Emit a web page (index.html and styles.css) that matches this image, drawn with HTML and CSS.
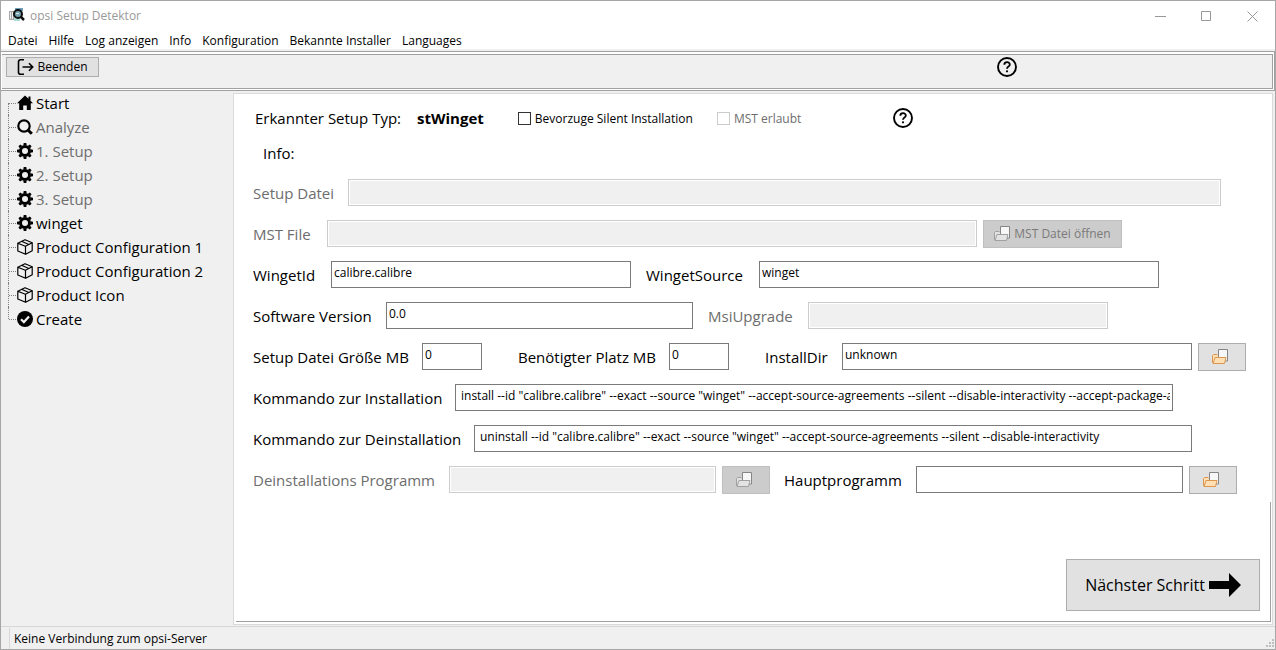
FILE: index.html
```html
<!DOCTYPE html>
<html lang="de">
<head>
<meta charset="utf-8">
<title>opsi Setup Detektor</title>
<link rel="stylesheet" href="styles.css">
</head>
<body>
<svg class="sprite" aria-hidden="true">
  <symbol id="gear" viewBox="0 0 16 16">
    <g fill="currentColor">
      <path fill-rule="evenodd" d="M8 2a6 6 0 1 0 0 12A6 6 0 0 0 8 2zm0 3a3 3 0 1 1 0 6 3 3 0 0 1 0-6z"/>
      <path d="M6.300 2.500 6.700 0h2.600l.4 2.500zM6.300 13.500 6.700 16h2.600l.4-2.500zM2.500 6.300 0 6.700v2.600l2.500.4zM13.500 6.300l2.500.4v2.600l-2.500.4z"/>
      <path d="M2.900 5.300 1.400 3.300l1.900-1.900 2 1.500zM13.100 5.300l1.500-2-1.900-1.900-2 1.500zM2.900 10.700l-1.500 2 1.900 1.900 2-1.500zM13.100 10.700l1.500 2-1.900 1.900-2-1.500z"/>
    </g>
  </symbol>
  <symbol id="box" viewBox="0 0 16 16">
    <g fill="none" stroke="currentColor" stroke-width="1.200" stroke-linejoin="round" stroke-linecap="round">
      <path d="M8 .7 15.200 3.700v8L8.600 15.300 .8 12V4.200zM.8 4.200l7.600 3.100 6.800-3.600M8.500 7.300v7.900M4.500 2.300l7.400 3.200"/>
    </g>
  </symbol>
  <symbol id="help" viewBox="0 0 20 20">
    <circle cx="10" cy="10" r="9" fill="none" stroke="currentColor" stroke-width="1.900"/>
    <path d="M7.300 7.700C7.500 4.300 12.900 4.500 12.800 7.700 12.700 9.700 10 9.500 10 11.800" fill="none" stroke="currentColor" stroke-width="1.800"/>
    <circle cx="10" cy="14.300" r="1.100" fill="currentColor"/>
  </symbol>
  <symbol id="folder" viewBox="0 0 16 16">
    <path class="folder-back" d="M.5 13.500V6.500l1-1H5l1 1h6v7z"/>
    <path class="folder-page" d="M6.500.5h9V12h-9z"/>
    <path class="folder-front" d="M3 8.500h11l-1.500 6H1z"/>
  </symbol>
</svg>

<div class="window">
  <header class="titlebar">
    <svg class="app-icon" viewBox="0 0 16 16" aria-hidden="true">
      <path d="M0 3h5v9H0z" fill="#a5a5a5"/><path d="M1 4h1v7H1zM3 4h1v7H3z" fill="#eee"/>
      <path d="M6 0h8v3H6z" fill="#6f9fba"/><path d="M5 10h6v3H5z" fill="#a9dcd4"/>
      <circle cx="9" cy="6" r="4" fill="#76a2ad" stroke="#111" stroke-width="2"/>
      <path d="M7 5h3v1H7z" fill="#d8edf0"/>
      <path d="m12 9 3 3" stroke="#111" stroke-width="2.500"/>
    </svg>
    <h1 class="title">opsi Setup Detektor</h1>
    <div class="window-controls">
      <button class="window-button" aria-label="Minimieren"><svg viewBox="0 0 11 11"><path d="M0 5.500h11"/></svg></button>
      <button class="window-button" aria-label="Maximieren"><svg viewBox="0 0 11 11"><path d="M.5.5h9v9h-9z"/></svg></button>
      <button class="window-button" aria-label="Schließen"><svg viewBox="0 0 11 11"><path d="m.5.5 10 10m0-10-10 10"/></svg></button>
    </div>
  </header>

  <nav class="menubar" aria-label="Menü">
    <button>Datei</button><button>Hilfe</button><button>Log anzeigen</button><button>Info</button><button>Konfiguration</button><button>Bekannte Installer</button><button>Languages</button>
  </nav>

  <div class="toolbar">
    <div class="toolbar-inner">
      <button class="button quit">
        <svg class="quit-icon" viewBox="0 0 16 16" aria-hidden="true"><path d="M6.500.8H3A2 2 0 0 0 1 2.800v10.400a2 2 0 0 0 2 2h3.500M5 8h10M11.500 4.300 15.200 8l-3.700 3.700"/></svg>
        Beenden
      </button>
      <button class="help toolbar-help" aria-label="Hilfe"><svg><use href="#help"/></svg></button>
    </div>
  </div>

  <div class="workspace">
    <ul class="tree">
      <li><svg viewBox="0 0 16 16"><path d="M8 .5 0 8.300h2.200V15h4v-4.500h3.600V15h4V8.300H16l-2.500-2.500V1.500h-2v2.300z" fill="currentColor"/></svg>Start</li>
      <li class="muted"><svg viewBox="0 0 16 16"><circle cx="7" cy="7" r="5.700" fill="none" stroke="currentColor" stroke-width="2.200"/><path d="m11.200 11.200 3.600 3.600" stroke="currentColor" stroke-width="3"/></svg><span>Analyze</span></li>
      <li class="muted"><svg><use href="#gear"/></svg><span>1. Setup</span></li>
      <li class="muted"><svg><use href="#gear"/></svg><span>2. Setup</span></li>
      <li class="muted"><svg><use href="#gear"/></svg><span>3. Setup</span></li>
      <li><svg><use href="#gear"/></svg>winget</li>
      <li><svg><use href="#box"/></svg>Product Configuration 1</li>
      <li><svg><use href="#box"/></svg>Product Configuration 2</li>
      <li><svg><use href="#box"/></svg>Product Icon</li>
      <li><svg viewBox="0 0 16 16"><circle cx="8" cy="8" r="8" fill="currentColor"/><path d="m4 8.200 2.900 2.900L12 5.500" fill="none" stroke="#f0f0f0" stroke-width="2.200"/></svg>Create</li>
    </ul>

    <main class="panel">
      <form class="form">
        <div class="type-row">
          <span>Erkannter Setup Typ:</span>
          <strong>stWinget</strong>
          <label class="check"><input type="checkbox">Bevorzuge Silent Installation</label>
          <label class="check muted"><input type="checkbox" disabled>MST erlaubt</label>
          <button type="button" class="help" aria-label="Hilfe"><svg><use href="#help"/></svg></button>
        </div>
        <p class="info">Info:</p>

        <div class="row row-setup">
          <label class="muted" for="setup">Setup Datei</label><input id="setup" disabled>
        </div>
        <div class="row row-mst">
          <label class="muted" for="mst">MST File</label><input id="mst" disabled>
          <button type="button" class="button browse" disabled><svg><use href="#folder"/></svg>MST Datei öffnen</button>
        </div>
        <div class="row row-winget">
          <label for="wid">WingetId</label><input id="wid" value="calibre.calibre">
          <label for="wsrc">WingetSource</label><input id="wsrc" value="winget">
        </div>
        <div class="row row-version">
          <label for="ver">Software Version</label><input id="ver" value="0.0">
          <label class="muted" for="msi">MsiUpgrade</label><input id="msi" disabled>
        </div>
        <div class="row row-size">
          <label for="size">Setup Datei Größe MB</label><input id="size" value="0">
          <label for="space">Benötigter Platz MB</label><input id="space" value="0">
          <label for="dir">InstallDir</label><input id="dir" value="unknown">
          <button type="button" class="button browse icon-only" aria-label="InstallDir wählen"><svg><use href="#folder"/></svg></button>
        </div>
        <div class="row row-install">
          <label for="inst">Kommando zur Installation</label><input class="command" id="inst" value='install --id "calibre.calibre" --exact --source "winget" --accept-source-agreements --silent --disable-interactivity --accept-package-agreements'>
        </div>
        <div class="row row-uninstall">
          <label for="uninst">Kommando zur Deinstallation</label><input class="command" id="uninst" value='uninstall --id "calibre.calibre" --exact --source "winget" --accept-source-agreements --silent --disable-interactivity'>
        </div>
        <div class="row row-program">
          <label class="muted" for="unprog">Deinstallations Programm</label><input id="unprog" disabled>
          <button type="button" class="button browse icon-only" disabled aria-label="Deinstallations Programm wählen"><svg><use href="#folder"/></svg></button>
          <label for="main">Hauptprogramm</label><input id="main">
          <button type="button" class="button browse icon-only" aria-label="Hauptprogramm wählen"><svg><use href="#folder"/></svg></button>
        </div>
      </form>
      <div class="actions">
        <button class="button next">Nächster Schritt<svg viewBox="0 0 32 24" aria-hidden="true"><path d="M0 8h20V0l12 12-12 12v-8H0z" fill="currentColor"/></svg></button>
      </div>
    </main>
  </div>

  <footer class="statusbar">
    <span>Keine Verbindung zum opsi-Server</span>
    <svg class="grip" viewBox="0 0 8 8" aria-hidden="true"><path d="M6 0h2v2H6zM3 3h2v2H3zM6 3h2v2H6zM0 6h2v2H0zM3 6h2v2H3zM6 6h2v2H6z" fill="#bfbfbf"/></svg>
  </footer>
</div>
</body>
</html>
```
FILE: styles.css
```css
* { box-sizing: border-box; }
body {
  margin: 0;
  font-family: "Open Sans", "Noto Sans", sans-serif;
  font-size: 12px;
  color: #000;
}
button, input { font: inherit; color: inherit; margin: 0; }
button { padding: 0; border: 0; background: none; }
svg { display: block; flex: none; }
.sprite { position: absolute; width: 0; height: 0; }
.muted { color: #6d6d6d; }

.window {
  display: flex;
  flex-direction: column;
  min-height: 100vh;
  border: 1px solid #a6a6a6;
  background: #f0f0f0;
}

/* Title bar and menu */
.titlebar {
  display: flex;
  align-items: center;
  height: 30px;
  padding-left: 8px;
  background: #fff;
}
.app-icon { width: 16px; height: 16px; margin-right: 5px; }
.title { margin: 0; font-size: 12px; font-weight: 400; line-height: 16px; color: #999; }
.window-controls { display: flex; margin-left: auto; }
.window-button { display: flex; justify-content: center; align-items: center; width: 46px; height: 28px; }
.window-button svg { width: 11px; height: 11px; fill: none; stroke: #999; }
.menubar {
  display: flex;
  gap: 11px;
  height: 18px;
  padding-left: 7px;
  background: #fff;
}
.menubar button { line-height: 20px; }

/* Toolbar */
.toolbar {
  margin-top: 2px;
  padding: 2px 1px 1px;
  border: 1px solid #a0a0a0;
  border-left: 0;
  background: #fff;
}
.toolbar-inner {
  display: flex;
  align-items: flex-start;
  height: 35px;
  padding: 2px 4px;
  border: 1px solid #a0a0a0;
  border-left: 0;
  background: #f0f0f0;
}
.button {
  display: flex;
  align-items: center;
  justify-content: center;
  border: 1px solid #adadad;
  background: #e1e1e1;
}
.button:disabled { border-color: #bfbfbf; background: #ccc; color: #7a7a7a; }
.quit { width: 93px; height: 20px; gap: 3px; line-height: 16px; }
.quit-icon { width: 17px; height: 16px; fill: none; stroke: #000; stroke-width: 1.600; }
.help svg { width: 20px; height: 20px; }
.toolbar-help { margin: 0 251px 0 auto; }

/* Navigation tree */
.workspace { display: grid; grid-template-columns: 232px minmax(0, 1fr); flex: 1; padding: 0 2px 1px 0; }
.tree { margin: 0; padding: 0 0 0 7px; list-style: none; font-size: 15px; }
.tree li { position: relative; display: flex; align-items: center; gap: 3px; height: 24px; padding-left: 9px; }
.tree li::before { content: ""; position: absolute; left: 0; top: 0; height: 24px; border-left: 1px dotted #808080; }
.tree li:first-child::before { top: 12px; height: 12px; }
.tree li:last-child::before { height: 12px; }
.tree li::after { content: ""; position: absolute; left: 1px; top: 12px; width: 7px; border-top: 1px dotted #808080; }
.tree svg { width: 16px; height: 16px; color: #000; }

/* Form panel */
.panel {
  display: flex;
  flex-direction: column;
  margin-top: 2px;
  border: 1px solid #dadada;
  background: #fff;
}
.form { padding: 10px 0 0 19px; font-size: 15px; }
.type-row { display: flex; align-items: center; height: 28px; padding-left: 2px; }
.type-row strong { margin-left: 16px; }
.type-row .help { margin-left: 92px; }
.check { display: flex; align-items: center; gap: 4px; margin-left: 34px; font-size: 12px; }
.check + .check { margin-left: 24px; }
.check input { appearance: none; width: 13px; height: 13px; border: 1px solid #333; background: #fff; }
.check input:disabled { border-color: #ccc; }
.info { margin: 0; padding: 9px 10px 0; line-height: 24px; }

.row { display: grid; align-items: center; height: 41px; white-space: nowrap; }
.info + .row { margin-top: 7px; }
.row input {
  width: 100%;
  min-width: 0;
  height: 27px;
  padding: 0 2px 5px;
  border: 1px solid #7a7a7a;
  background: #fff;
  font-size: 12px;
}
.row input:disabled { border-color: #ccc; background: #f0f0f0; box-shadow: inset 0 0 0 1px #fff; }
.row .command { padding-left: 5px; }
.browse { height: 28px; margin-left: 6px; gap: 4px; font-size: 12px; }
.browse svg { width: 16px; height: 16px; }
.icon-only { padding-right: 4px; }
.folder-back, .folder-front { fill: #ffe0b5; stroke: #dc9650; }
.folder-page { fill: #f7f7f7; stroke: #858585; }
.browse:disabled svg { filter: grayscale(1); }

.row-setup { grid-template-columns: 95px 1fr; padding-right: 51px; }
.row-mst { grid-template-columns: 74px 1fr 145px; padding-right: 150px; }
.row-winget { grid-template-columns: 78px 3fr 128px 4fr; padding-right: 113px; }
.row-version { grid-template-columns: 133px 307fr 115px 300fr; padding-right: 164px; }
.row-size { grid-template-columns: 169px 60px 187px 60px 113px 1fr 54px; padding-right: 26px; }
.row-install { grid-template-columns: 202px 1fr; padding-right: 99px; }
.row-uninstall { grid-template-columns: 221px 1fr; padding-right: 80px; }
.row-program { grid-template-columns: 196px 1fr 54px 146px 1fr 54px; padding-right: 35px; }
.row-winget label:nth-of-type(2), .row-version label:nth-of-type(2) { padding-left: 15px; }
.row-size label:nth-of-type(n+2) { padding-left: 36px; }
.row-program label:nth-of-type(2) { padding-left: 14px; }

.actions {
  display: flex;
  flex: 1;
  justify-content: flex-end;
  align-items: flex-end;
  margin: 2px 1px 2px 2px;
  padding: 0 10px 10px 0;
  border: solid #a0a0a0;
  border-width: 0 1px 1px 0;
}
.next { width: 194px; height: 52px; gap: 4px; font-size: 16px; }
.next svg { width: 32px; height: 24px; }

.statusbar {
  display: flex;
  align-items: flex-end;
  height: 23px;
  border-top: 1px solid #d7d7d7;
}
.statusbar span { margin-left: 8px; padding-left: 4px; border-left: 1px solid #d7d7d7; line-height: 21px; }
.grip { width: 8px; height: 8px; margin: auto 1px 2px auto; }
```
